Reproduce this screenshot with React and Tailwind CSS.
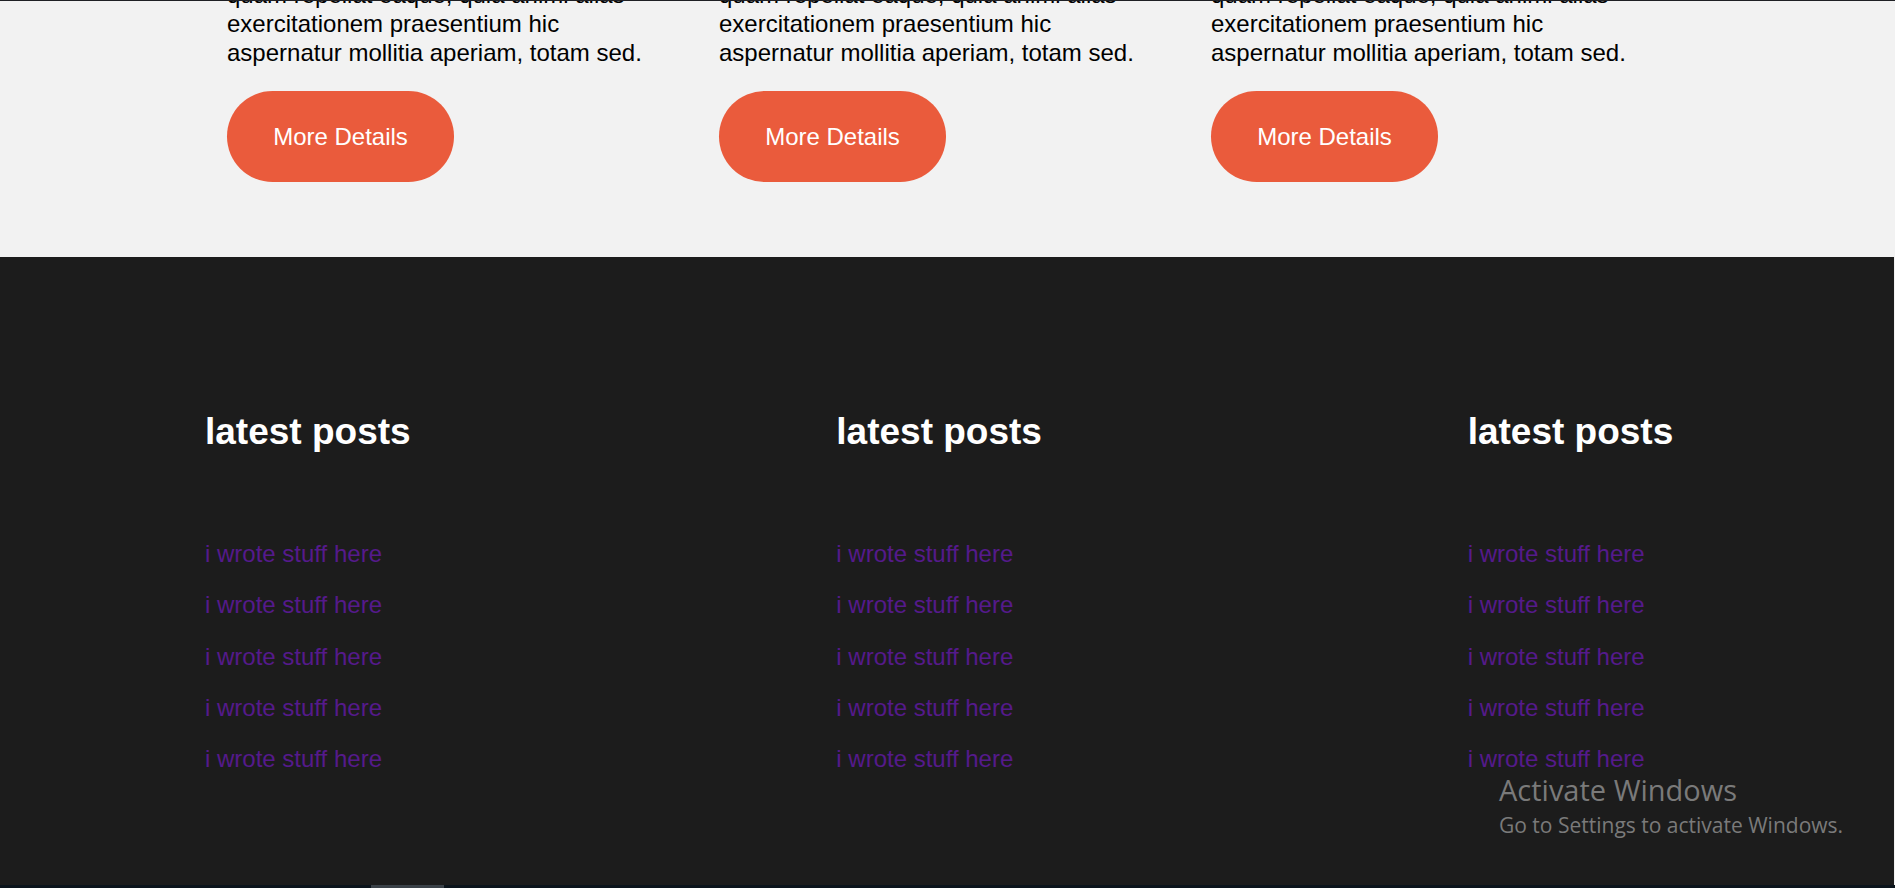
const cards = [1, 2, 3];
const columns = ['latest posts', 'latest posts', 'latest posts'];
const posts = [1, 2, 3, 4, 5];

function Card() {
  return (
    <div className="flex flex-col items-start">
      <p className="w-[430px] text-[24px] leading-[29px] text-black">
        quam repellat eaque, quia animi alias exercitationem praesentium hic aspernatur mollitia aperiam, totam sed.
      </p>
      <button className="mt-[24px] flex h-[91px] w-[227px] items-center justify-center rounded-full bg-[#ea5b3c] text-[24px] leading-[27px] text-white">
        More Details
      </button>
    </div>
  );
}

export default function App() {
  return (
    <div className="relative h-[888px] w-[1895px] overflow-hidden border-t border-[#1f2024] bg-[#f2f2f2] font-['Liberation_Sans',Arial,sans-serif]">
      {/* ── Cards (scrolled, first line cut off) ── */}
      <section className="-mt-[21px] pb-[75px]">
        <div className="grid grid-cols-[repeat(3,492px)] pl-[227px]">
          {cards.map((c) => (
            <Card key={c} />
          ))}
        </div>
      </section>

      {/* ── Footer ── */}
      <footer className="h-[628px] w-[1894px] bg-[#1c1c1c]">
        <div className="grid grid-cols-3 pt-[153px]">
          {columns.map((title, i) => (
            <div key={i} className="pl-[205px]">
              <h2 className="text-[37px] font-bold leading-[43px] text-white">{title}</h2>
              <ul className="mt-[87px] flex flex-col gap-[24px]">
                {posts.map((p) => (
                  <li key={p} className="text-[24px] leading-[27.25px]">
                    <a href="#" className="block text-[#551a8b]">
                      i wrote stuff here
                    </a>
                  </li>
                ))}
              </ul>
            </div>
          ))}
        </div>
      </footer>

      {/* ── bottom edge / scrollbar ── */}
      <div className="flex h-[3px] bg-[#0b141c]">
        <div className="ml-[371px] w-[73px] bg-[#3a4148]" />
      </div>

      {/* ── Activate Windows watermark ── */}
      <div className="pointer-events-none absolute left-[1499px] top-[770px] font-['Open_Sans',sans-serif] text-[#7a7a7a]">
        <p className="text-[29px] leading-[37px]">Activate Windows</p>
        <p className="text-[21px] leading-[34px]">Go to Settings to activate Windows.</p>
      </div>
    </div>
  );
}
